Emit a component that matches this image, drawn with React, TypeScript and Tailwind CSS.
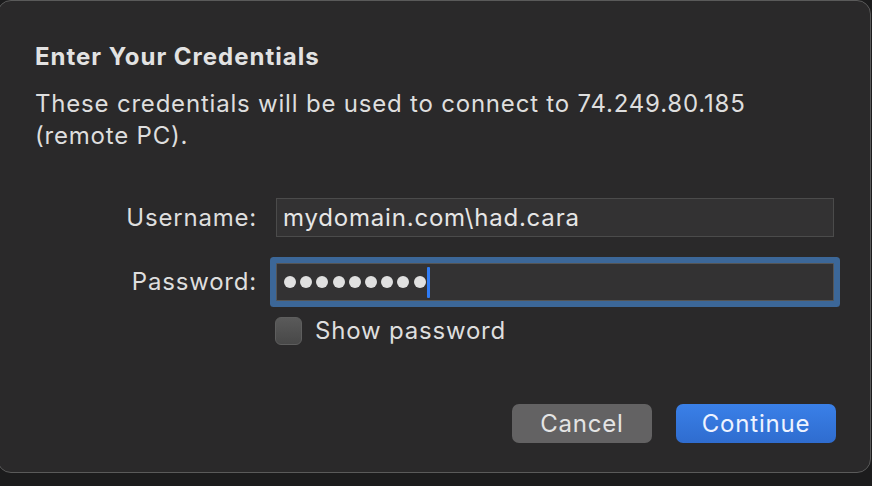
import React from "react";

const font = { fontFamily: "Inter, 'Noto Sans', sans-serif" };

export default function App() {
  return (
    <div className="h-[486px] w-[872px] overflow-hidden bg-[#1c1c1d]" style={font}>
      <div className="-ml-[3px] flex h-[473px] w-[874px] flex-col rounded-[14px] border border-[#5a5a5a] bg-[#2a292a] pl-[37px] pr-[34px] text-[#dedede]">
        {/* heading */}
        <h1 className="mt-[40px] text-[24px] font-bold leading-[32px] tracking-[1px] text-[#e2e2e2]">
          Enter Your Credentials
        </h1>
        <p className="mt-[15px] text-[24px] leading-[32px] tracking-[0.8px]">
          These credentials will be used to connect to 74.249.80.185
          <br />
          (remote PC).
        </p>

        {/* form */}
        <div className="mt-[46px] flex flex-col">
          <div className="flex items-center">
            <span className="w-[222px] text-right text-[24px] leading-[32px] tracking-[0.8px]">Username:</span>
            <div className="ml-[19px] flex h-[39px] w-[558px] items-center border border-[#4b4b4b] bg-[#333233] pl-[6px] text-[24px] leading-[32px] tracking-[0.8px] text-[#e6e6e6]">
              mydomain.com\had.cara
            </div>
          </div>

          <div className="mt-[26px] flex items-center">
            <span className="w-[222px] text-right text-[24px] leading-[32px] tracking-[0.8px]">Password:</span>
            <div className="ml-[19px] flex h-[38px] w-[558px] items-center rounded-[1px] border border-[#555] bg-[#333233] pl-[7px] ring-[6px] ring-[#3c6798]">
              <div className="flex gap-[4.2px]">
                {Array.from({ length: 9 }).map((_, i) => (
                  <span key={i} className="h-[12px] w-[12px] rounded-full bg-[#e0e0e0]" />
                ))}
              </div>
              <span className="ml-[1px] h-[31px] w-[3px] rounded-[1px] bg-[#2f7cf6]" />
            </div>
          </div>

          <div className="mt-[16px] ml-[240px] flex items-center gap-[13px]">
            <span className="h-[28px] w-[27px] rounded-[6px] border border-[#5e5e5e] bg-gradient-to-b from-[#5a5a5a] to-[#484848]" />
            <span className="text-[24px] leading-[28px] tracking-[0.8px]">Show password</span>
          </div>
        </div>

        {/* buttons */}
        <div className="mt-[59px] flex justify-end gap-[24px]">
          <button className="h-[39px] w-[140px] rounded-[7px] bg-[#636263] text-[24px] tracking-[0.8px] text-[#e4e4e4]">
            Cancel
          </button>
          <button className="h-[39px] w-[160px] rounded-[7px] bg-gradient-to-b from-[#3a80e8] to-[#2f6ccf] text-[24px] tracking-[0.8px] text-[#eef3ff]">
            Continue
          </button>
        </div>
      </div>
    </div>
  );
}
